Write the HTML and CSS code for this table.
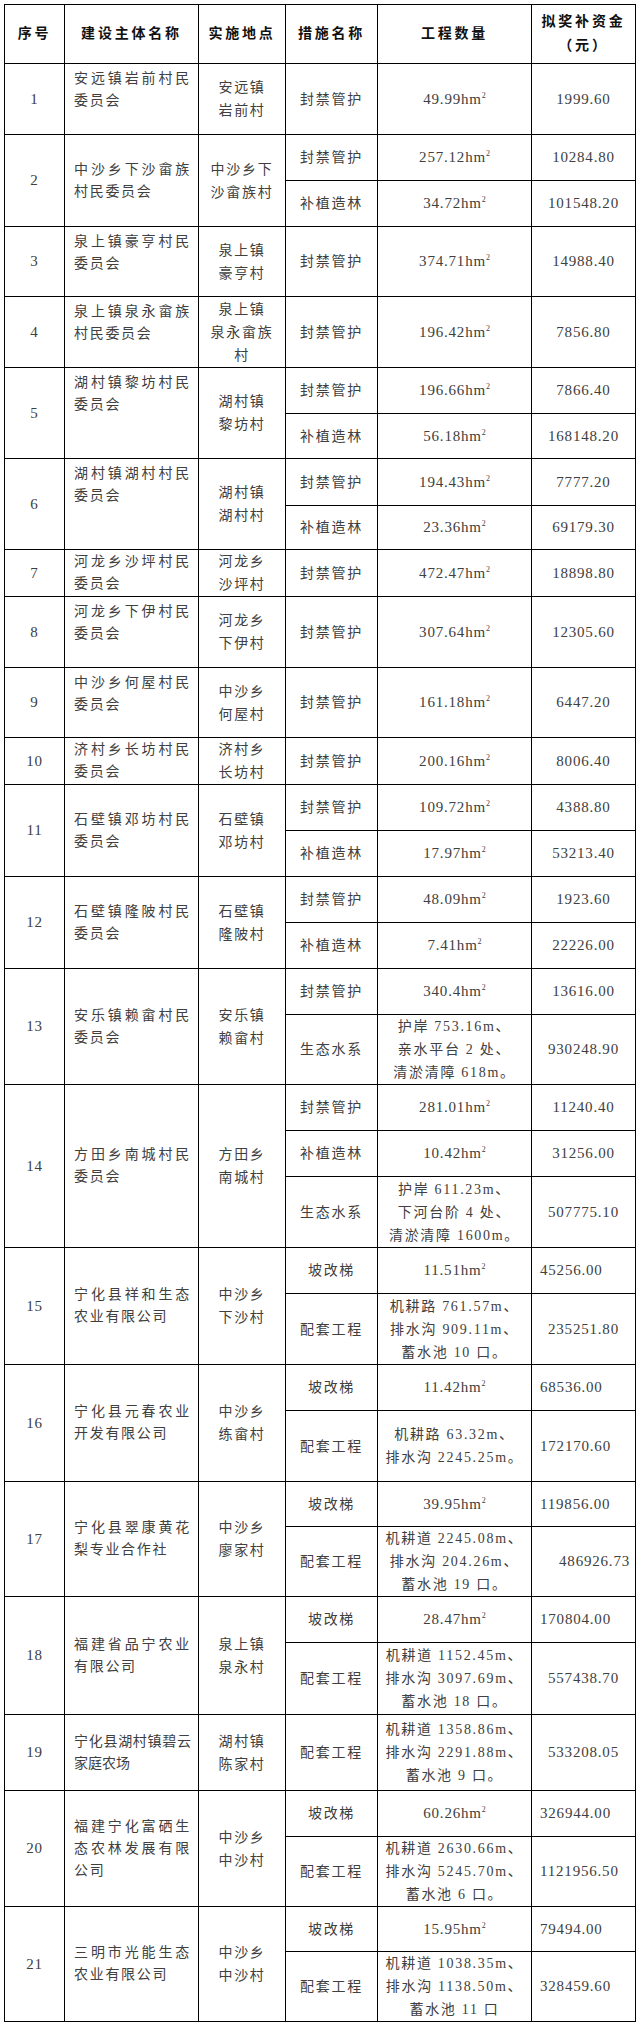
FILE: index.html
```html
<!DOCTYPE html>
<html lang="zh-CN">
<head>
<meta charset="utf-8">
<title>拟奖补资金表</title>
<link rel="stylesheet" href="styles.css">
</head>
<body>
<table class="tbl">
<colgroup>
<col class="c1"><col class="c2"><col class="c3"><col class="c4"><col class="c5"><col class="c6">
</colgroup>
<thead>
<tr class="h59"><th>序号</th><th>建设主体名称</th><th>实施地点</th><th>措施名称</th><th>工程数量</th><th>拟奖补资金<br>（元）</th></tr>
</thead>
<tbody>
<tr class="h71"><td class="num">1</td><td class="name top">安远镇岩前村民委员会</td><td>安远镇<br>岩前村</td><td>封禁管护</td><td class="num">49.99hm<sup>2</sup></td><td class="num">1999.60</td></tr>

<tr class="h46"><td class="num" rowspan="2">2</td><td class="name" rowspan="2">中沙乡下沙畲族村民委员会</td><td rowspan="2">中沙乡下<br>沙畲族村</td><td>封禁管护</td><td class="num">257.12hm<sup>2</sup></td><td class="num">10284.80</td></tr>
<tr class="h46"><td>补植造林</td><td class="num">34.72hm<sup>2</sup></td><td class="num">101548.20</td></tr>

<tr class="h70"><td class="num">3</td><td class="name top">泉上镇豪亨村民委员会</td><td>泉上镇<br>豪亨村</td><td>封禁管护</td><td class="num">374.71hm<sup>2</sup></td><td class="num">14988.40</td></tr>

<tr class="h71"><td class="num">4</td><td class="name top">泉上镇泉永畲族村民委员会</td><td>泉上镇<br>泉永畲族<br>村</td><td>封禁管护</td><td class="num">196.42hm<sup>2</sup></td><td class="num">7856.80</td></tr>

<tr class="h46"><td class="num" rowspan="2">5</td><td class="name top" rowspan="2">湖村镇黎坊村民委员会</td><td rowspan="2">湖村镇<br>黎坊村</td><td>封禁管护</td><td class="num">196.66hm<sup>2</sup></td><td class="num">7866.40</td></tr>
<tr class="h45"><td>补植造林</td><td class="num">56.18hm<sup>2</sup></td><td class="num">168148.20</td></tr>

<tr class="h47"><td class="num" rowspan="2">6</td><td class="name top" rowspan="2">湖村镇湖村村民委员会</td><td rowspan="2">湖村镇<br>湖村村</td><td>封禁管护</td><td class="num">194.43hm<sup>2</sup></td><td class="num">7777.20</td></tr>
<tr class="h44"><td>补植造林</td><td class="num">23.36hm<sup>2</sup></td><td class="num">69179.30</td></tr>

<tr class="h47"><td class="num">7</td><td class="name">河龙乡沙坪村民委员会</td><td>河龙乡<br>沙坪村</td><td>封禁管护</td><td class="num">472.47hm<sup>2</sup></td><td class="num">18898.80</td></tr>

<tr class="h71"><td class="num">8</td><td class="name top">河龙乡下伊村民委员会</td><td>河龙乡<br>下伊村</td><td>封禁管护</td><td class="num">307.64hm<sup>2</sup></td><td class="num">12305.60</td></tr>

<tr class="h70"><td class="num">9</td><td class="name top">中沙乡何屋村民委员会</td><td>中沙乡<br>何屋村</td><td>封禁管护</td><td class="num">161.18hm<sup>2</sup></td><td class="num">6447.20</td></tr>

<tr class="h46"><td class="num">10</td><td class="name">济村乡长坊村民委员会</td><td>济村乡<br>长坊村</td><td>封禁管护</td><td class="num">200.16hm<sup>2</sup></td><td class="num">8006.40</td></tr>

<tr class="h46"><td class="num" rowspan="2">11</td><td class="name" rowspan="2">石壁镇邓坊村民委员会</td><td rowspan="2">石壁镇<br>邓坊村</td><td>封禁管护</td><td class="num">109.72hm<sup>2</sup></td><td class="num">4388.80</td></tr>
<tr class="h46"><td>补植造林</td><td class="num">17.97hm<sup>2</sup></td><td class="num">53213.40</td></tr>

<tr class="h46"><td class="num" rowspan="2">12</td><td class="name" rowspan="2">石壁镇隆陂村民委员会</td><td rowspan="2">石壁镇<br>隆陂村</td><td>封禁管护</td><td class="num">48.09hm<sup>2</sup></td><td class="num">1923.60</td></tr>
<tr class="h46"><td>补植造林</td><td class="num">7.41hm<sup>2</sup></td><td class="num">22226.00</td></tr>

<tr class="h46"><td class="num" rowspan="2">13</td><td class="name" rowspan="2">安乐镇赖畲村民委员会</td><td rowspan="2">安乐镇<br>赖畲村</td><td>封禁管护</td><td class="num">340.4hm<sup>2</sup></td><td class="num">13616.00</td></tr>
<tr class="h70"><td>生态水系</td><td>护岸 753.16m、<br>亲水平台 2 处、<br>清淤清障 618m。</td><td class="num">930248.90</td></tr>

<tr class="h46"><td class="num" rowspan="3">14</td><td class="name" rowspan="3">方田乡南城村民委员会</td><td rowspan="3">方田乡<br>南城村</td><td>封禁管护</td><td class="num">281.01hm<sup>2</sup></td><td class="num">11240.40</td></tr>
<tr class="h46"><td>补植造林</td><td class="num">10.42hm<sup>2</sup></td><td class="num">31256.00</td></tr>
<tr class="h71"><td>生态水系</td><td>护岸 611.23m、<br>下河台阶 4 处、<br>清淤清障 1600m。</td><td class="num">507775.10</td></tr>

<tr class="h46"><td class="num" rowspan="2">15</td><td class="name" rowspan="2">宁化县祥和生态农业有限公司</td><td rowspan="2">中沙乡<br>下沙村</td><td>坡改梯</td><td class="num">11.51hm<sup>2</sup></td><td class="num left">45256.00</td></tr>
<tr class="h71"><td>配套工程</td><td>机耕路 761.57m、<br>排水沟 909.11m、<br>蓄水池 10 口。</td><td class="num">235251.80</td></tr>

<tr class="h46"><td class="num" rowspan="2">16</td><td class="name" rowspan="2">宁化县元春农业开发有限公司</td><td rowspan="2">中沙乡<br>练畲村</td><td>坡改梯</td><td class="num">11.42hm<sup>2</sup></td><td class="num left">68536.00</td></tr>
<tr class="h71"><td>配套工程</td><td>机耕路 63.32m、<br>排水沟 2245.25m。</td><td class="num left">172170.60</td></tr>

<tr class="h45"><td class="num" rowspan="2">17</td><td class="name" rowspan="2">宁化县翠康黄花梨专业合作社</td><td rowspan="2">中沙乡<br>廖家村</td><td>坡改梯</td><td class="num">39.95hm<sup>2</sup></td><td class="num left">119856.00</td></tr>
<tr class="h70"><td>配套工程</td><td>机耕道 2245.08m、<br>排水沟 204.26m、<br>蓄水池 19 口。</td><td class="num right">486926.73</td></tr>

<tr class="h46"><td class="num" rowspan="2">18</td><td class="name" rowspan="2">福建省品宁农业有限公司</td><td rowspan="2">泉上镇<br>泉永村</td><td>坡改梯</td><td class="num">28.47hm<sup>2</sup></td><td class="num left">170804.00</td></tr>
<tr class="h72"><td>配套工程</td><td>机耕道 1152.45m、<br>排水沟 3097.69m、<br>蓄水池 18 口。</td><td class="num">557438.70</td></tr>

<tr class="h76"><td class="num">19</td><td class="name tight">宁化县湖村镇碧云家庭农场</td><td>湖村镇<br>陈家村</td><td>配套工程</td><td>机耕道 1358.86m、<br>排水沟 2291.88m、<br>蓄水池 9 口。</td><td class="num">533208.05</td></tr>

<tr class="h46"><td class="num" rowspan="2">20</td><td class="name" rowspan="2">福建宁化富硒生态农林发展有限公司</td><td rowspan="2">中沙乡<br>中沙村</td><td>坡改梯</td><td class="num">60.26hm<sup>2</sup></td><td class="num left">326944.00</td></tr>
<tr class="h70"><td>配套工程</td><td>机耕道 2630.66m、<br>排水沟 5245.70m、<br>蓄水池 6 口。</td><td class="num left">1121956.50</td></tr>

<tr class="h45"><td class="num" rowspan="2">21</td><td class="name" rowspan="2">三明市光能生态农业有限公司</td><td rowspan="2">中沙乡<br>中沙村</td><td>坡改梯</td><td class="num">15.95hm<sup>2</sup></td><td class="num left">79494.00</td></tr>
<tr class="h70"><td>配套工程</td><td>机耕道 1038.35m、<br>排水沟 1138.50m、<br>蓄水池 11 口</td><td class="num left">328459.60</td></tr>
</tbody>
</table>
</body>
</html>
```

FILE: styles.css
```css
html, body {
  margin: 0;
  padding: 0;
  background: #ffffff;
}

.tbl {
  border-collapse: collapse;
  table-layout: fixed;
  width: 632px;
  margin: 4px 0 0 4px;
  font-family: "Liberation Serif", "Noto Sans CJK SC", serif;
  font-size: 14px;
  color: #404040;
  letter-spacing: 1.7px;
}

.c1 { width: 60px; }
.c2 { width: 134px; }
.c3 { width: 87px; }
.c4 { width: 92px; }
.c5 { width: 154px; }
.c6 { width: 104px; }

.tbl th,
.tbl td {
  border: 1px solid #000000;
  padding: 0;
  text-align: center;
  vertical-align: middle;
  line-height: 23px;
}

.tbl th {
  font-weight: 700;
  color: #111111;
  letter-spacing: 2.8px;
  line-height: 24px;
}

.h44 { height: 44px; }
.h45 { height: 45px; }
.h46 { height: 46px; }
.h47 { height: 47px; }
.h59 { height: 59px; }
.h70 { height: 70px; }
.h71 { height: 71px; }
.h72 { height: 72px; }
.h76 { height: 76px; }

.tbl td.name {
  text-align: justify;
  padding: 0 7px 0 9px;
  line-height: 22px;
}

.tbl td.name.top {
  vertical-align: top;
  padding-top: 4px;
}

.tbl td.tight {
  letter-spacing: 0;
}

.num {
  font-size: 15px;
  letter-spacing: 0.8px;
}

.tbl td.left {
  text-align: left;
  padding-left: 8px;
}

.tbl td.right {
  text-align: right;
  padding-right: 5px;
}

.tbl sup {
  font-size: 8px;
  line-height: 0;
  vertical-align: 6px;
  letter-spacing: 0;
}
```
